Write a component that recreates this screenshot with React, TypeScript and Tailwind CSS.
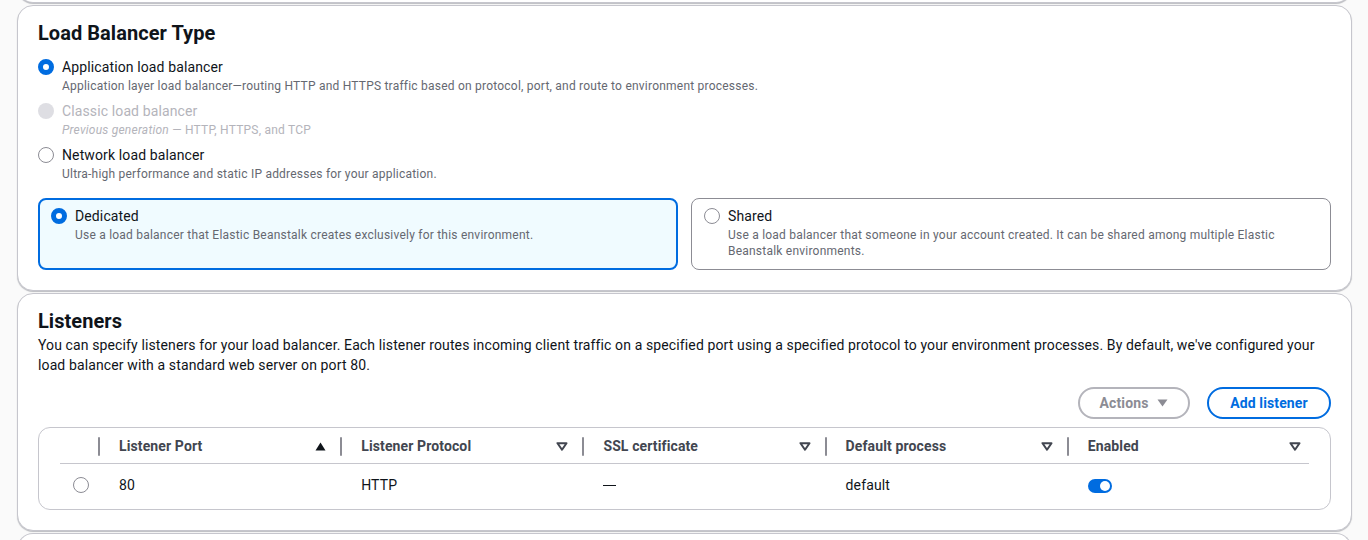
import React from "react";

function Radio({ state }: { state: "on" | "off" | "disabled" }) {
  if (state === "on")
    return <span className="block w-4 h-4 shrink-0 rounded-full border-[5px] border-[#006ce0] bg-white" />;
  if (state === "disabled")
    return <span className="block w-4 h-4 shrink-0 rounded-full bg-[#dedee3]" />;
  return <span className="block w-4 h-4 shrink-0 rounded-full border border-[#8c8c94] bg-white" />;
}

function SortUp() {
  return (
    <svg width="11" height="9" viewBox="0 0 11 9" className="shrink-0">
      <path d="M0.5 8.5 L5.5 0.5 L10.5 8.5 Z" fill="#0f141a" />
    </svg>
  );
}

function SortDown() {
  return (
    <svg width="12" height="9" viewBox="0 0 12 9" className="shrink-0">
      <path d="M1.5 1.2 L10.5 1.2 L6 7.8 Z" fill="none" stroke="#424650" strokeWidth="2" strokeLinejoin="round" />
    </svg>
  );
}

function Divider() {
  return <span className="block w-[2px] h-[19px] bg-[#8c8c94] rounded-full shrink-0" />;
}

function HeaderCell({ label, sorted, last }: { label: string; sorted?: boolean; last?: boolean }) {
  return (
    <div className={`flex items-center h-full pt-[1px] ${last ? "pr-[8px]" : "pr-[14px]"}`}>
      <Divider />
      <span className="ml-[19px] flex-1 font-bold text-[14px] tracking-[0.12px] text-[#424650] pt-[1px]">{label}</span>
      {sorted ? <SortUp /> : <SortDown />}
    </div>
  );
}

function BodyCell({ children }: { children: React.ReactNode }) {
  return <div className="flex items-center h-full pl-[21px] pt-[2px] text-[14px] tracking-[0.12px] text-[#0f141a]">{children}</div>;
}

export default function App() {
  return (
    <div className="min-h-[540px] bg-[#fafafa] font-[Roboto,'Liberation_Sans',sans-serif] text-[#0f141a] overflow-hidden">
      <div className="flex flex-col gap-[2px] pl-[17px] pr-[16px]">
        {/* previous container tail */}
        <div className="-mt-[21px] h-[24px] rounded-b-[16px] bg-white border border-t-0 border-[#c6c6cd] shadow-[0_1px_1px_0_rgba(0,7,22,0.25)]" />

        {/* Load Balancer Type */}
        <section className="rounded-[16px] bg-white border border-[#c6c6cd] shadow-[0_1px_1px_0_rgba(0,7,22,0.25)] px-[20px] pt-[15px] pb-[20px]">
          <h2 className="text-[20px] leading-[24px] font-bold tracking-[0.05px]">Load Balancer Type</h2>
          <div className="mt-[12px] flex flex-col gap-[7px]">
            <div className="flex gap-[8px]">
              <div className="pt-[2px]"><Radio state="on" /></div>
              <div>
                <div className="text-[14px] leading-[20px] tracking-[0.12px]">Application load balancer</div>
                <div className="mt-[1px] text-[12px] leading-[16px] tracking-[0.22px] text-[#656871]">
                  Application layer load balancer—routing HTTP and HTTPS traffic based on protocol, port, and route to environment processes.
                </div>
              </div>
            </div>
            <div className="flex gap-[8px]">
              <div className="pt-[2px]"><Radio state="disabled" /></div>
              <div>
                <div className="text-[14px] leading-[20px] tracking-[0.12px] text-[#b4b4bb]">Classic load balancer</div>
                <div className="mt-[1px] text-[12px] leading-[16px] tracking-[0.22px] text-[#b4b4bb]">
                  <i>Previous generation</i> — HTTP, HTTPS, and TCP
                </div>
              </div>
            </div>
            <div className="flex gap-[8px]">
              <div className="pt-[2px]"><Radio state="off" /></div>
              <div>
                <div className="text-[14px] leading-[20px] tracking-[0.12px]">Network load balancer</div>
                <div className="mt-[1px] text-[12px] leading-[16px] tracking-[0.22px] text-[#656871]">
                  Ultra-high performance and static IP addresses for your application.
                </div>
              </div>
            </div>
          </div>

          <div className="mt-[16px] grid grid-cols-2 gap-[13px]">
            <div className="flex gap-[8px] rounded-[8px] border-2 border-[#006ce0] bg-[#f0fbff] pl-[11px] pr-[12px] pt-[6px] pb-[9px]">
              <div className="pt-[2px]"><Radio state="on" /></div>
              <div>
                <div className="text-[14px] leading-[20px] tracking-[0.12px]">Dedicated</div>
                <div className="mt-[1px] text-[12px] leading-[16px] tracking-[0.22px] text-[#656871]">
                  Use a load balancer that Elastic Beanstalk creates exclusively for this environment.
                </div>
              </div>
            </div>
            <div className="flex gap-[8px] rounded-[8px] border border-[#8c8c94] bg-white pl-[12px] pr-[40px] pt-[7px] pb-[10px]">
              <div className="pt-[2px]"><Radio state="off" /></div>
              <div>
                <div className="text-[14px] leading-[20px] tracking-[0.12px]">Shared</div>
                <div className="mt-[1px] text-[12px] leading-[16px] tracking-[0.22px] text-[#656871]">
                  Use a load balancer that someone in your account created. It can be shared among multiple Elastic Beanstalk environments.
                </div>
              </div>
            </div>
          </div>
        </section>

        {/* Listeners */}
        <section className="rounded-[16px] bg-white border border-[#c6c6cd] shadow-[0_1px_1px_0_rgba(0,7,22,0.25)] px-[20px] pt-[15px] pb-[20px]">
          <h2 className="text-[20px] leading-[24px] font-bold tracking-[0.05px]">Listeners</h2>
          <p className="mt-[2px] text-[14px] leading-[20px] tracking-[0.12px] text-[#0f141a]">
            You can specify listeners for your load balancer. Each listener routes incoming client traffic on a specified port using a specified protocol to your environment processes. By default, we've configured your load balancer with a standard web server on port 80.
          </p>
          <div className="mt-[12px] flex justify-end gap-[17px]">
            <button className="h-[32px] w-[112px] rounded-full border-2 border-[#b4b4bb] bg-white flex items-center justify-center gap-[9px] text-[14px] tracking-[0.12px] font-bold text-[#8c8c94]">
              Actions
              <svg width="11" height="8" viewBox="0 0 11 8"><path d="M0.5 0.5 L10.5 0.5 L5.5 7.5 Z" fill="#8c8c94" /></svg>
            </button>
            <button className="h-[32px] w-[124px] rounded-full border-2 border-[#006ce0] bg-white flex items-center justify-center text-[14px] tracking-[0.12px] font-bold text-[#006ce0]">
              Add listener
            </button>
          </div>

          <div className="mt-[8px] rounded-[12px] border border-[#c6c6cd] bg-white px-[21px] pb-[4px]">
            <div className="grid grid-cols-[38px_repeat(5,1fr)] h-[36px] border-b border-[#c6c6cd]">
              <div />
              <HeaderCell label="Listener Port" sorted />
              <HeaderCell label="Listener Protocol" />
              <HeaderCell label="SSL certificate" />
              <HeaderCell label="Default process" />
              <HeaderCell label="Enabled" last />
            </div>
            <div className="grid grid-cols-[38px_repeat(5,1fr)] h-[41px]">
              <div className="flex items-center pl-[13px] pt-[1px]"><Radio state="off" /></div>
              <BodyCell>80</BodyCell>
              <BodyCell>HTTP</BodyCell>
              <BodyCell><span className="inline-block w-[13px] h-[1.5px] bg-[#0f141a]" /></BodyCell>
              <BodyCell>default</BodyCell>
              <BodyCell>
                <span className="relative block w-[24px] h-[14px] rounded-full bg-[#006ce0]">
                  <span className="absolute right-[2px] top-[2px] w-[10px] h-[10px] rounded-full bg-white" />
                </span>
              </BodyCell>
            </div>
          </div>
        </section>

        <div className="h-[24px] rounded-t-[16px] bg-white border border-b-0 border-[#c6c6cd]" />
      </div>
    </div>
  );
}
